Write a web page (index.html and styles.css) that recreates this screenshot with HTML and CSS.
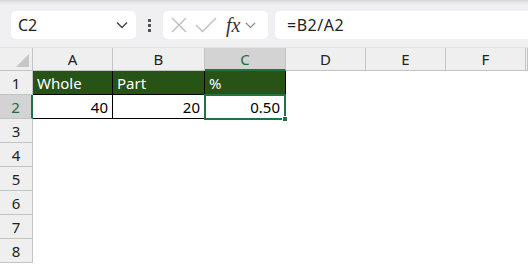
FILE: index.html
```html
<!DOCTYPE html>
<html lang="en">
<head>
  <meta charset="UTF-8">
  <title>Sheet</title>
  <link rel="stylesheet" href="styles.css">
</head>
<body>
  <div class="toolbar">
    <div class="name-box">
      <span class="name-text">C2</span>
      <svg class="chevron" width="12" height="8" viewBox="0 0 12 8"><path d="M1 1.5 L6 6.5 L11 1.5" fill="none" stroke="#444" stroke-width="1.4"/></svg>
    </div>
    <div class="dots"><span></span><span></span><span></span></div>
    <div class="fx-box">
      <svg width="18" height="18" viewBox="0 0 18 18"><path d="M2 2 L16 16 M16 2 L2 16" stroke="#bdbdbd" stroke-width="1.3"/></svg>
      <svg width="22" height="18" viewBox="0 0 22 18"><path d="M1 9 L7.5 15.5 L21 2" fill="none" stroke="#bdbdbd" stroke-width="1.3"/></svg>
      <span class="fx">fx</span>
      <svg class="fx-chevron" width="11" height="7" viewBox="0 0 11 7"><path d="M1 1 L5.5 5.5 L10 1" fill="none" stroke="#888" stroke-width="1.2"/></svg>
    </div>
    <div class="formula">=B2/A2</div>
  </div>

  <div class="sheet">
    <div class="hd corner"><span class="tri"></span></div>
    <div class="hd col">A</div>
    <div class="hd col">B</div>
    <div class="hd col sel">C</div>
    <div class="hd col">D</div>
    <div class="hd col">E</div>
    <div class="hd col">F</div>
    <div class="hd col last"></div>

    <div class="hd row">1</div>
    <div class="cell title">Whole</div>
    <div class="cell title">Part</div>
    <div class="cell title">%</div>
    <div class="cell"></div><div class="cell"></div><div class="cell"></div><div class="cell"></div>

    <div class="hd row sel">2</div>
    <div class="cell num boxed">40</div>
    <div class="cell num boxed">20</div>
    <div class="cell num active">0.50<span class="handle"></span></div>
    <div class="cell"></div><div class="cell"></div><div class="cell"></div><div class="cell"></div>

    <div class="hd row">3</div>
    <div class="cell"></div><div class="cell"></div><div class="cell"></div><div class="cell"></div><div class="cell"></div><div class="cell"></div><div class="cell"></div>
    <div class="hd row">4</div>
    <div class="cell"></div><div class="cell"></div><div class="cell"></div><div class="cell"></div><div class="cell"></div><div class="cell"></div><div class="cell"></div>
    <div class="hd row">5</div>
    <div class="cell"></div><div class="cell"></div><div class="cell"></div><div class="cell"></div><div class="cell"></div><div class="cell"></div><div class="cell"></div>
    <div class="hd row">6</div>
    <div class="cell"></div><div class="cell"></div><div class="cell"></div><div class="cell"></div><div class="cell"></div><div class="cell"></div><div class="cell"></div>
    <div class="hd row">7</div>
    <div class="cell"></div><div class="cell"></div><div class="cell"></div><div class="cell"></div><div class="cell"></div><div class="cell"></div><div class="cell"></div>
    <div class="hd row">8</div>
    <div class="cell"></div><div class="cell"></div><div class="cell"></div><div class="cell"></div><div class="cell"></div><div class="cell"></div><div class="cell"></div>
  </div>
</body>
</html>
```

FILE: styles.css
```css
* {
  box-sizing: border-box;
}
body {
  margin: 0;
  font-family: "Noto Sans", "Open Sans", sans-serif;
  background: #fff;
  overflow: hidden;
}
.toolbar {
  height: 48px;
  display: flex;
  align-items: flex-start;
  padding: 11px 0 0 11px;
  background: linear-gradient(#d8d6d8 0, #e9e8ea 3px, #f0eff1 5px);
  border-bottom: 1px solid #e4e4e4;
}
.name-box {
  width: 125px;
  height: 28px;
  background: #fff;
  border-radius: 5px;
  display: flex;
  align-items: center;
  justify-content: space-between;
  padding: 0 8px 0 7px;
}
.name-text {
  font-size: 16px;
  color: #222;
}
.dots {
  width: 27px;
  height: 28px;
  display: flex;
  flex-direction: column;
  align-items: center;
  justify-content: center;
  gap: 2px;
}
.dots span {
  width: 3px;
  height: 3px;
  background: #555;
}
.fx-box {
  width: 105px;
  height: 28px;
  background: #fff;
  border-radius: 5px;
  display: flex;
  align-items: center;
  padding-left: 7px;
  gap: 7px;
}
.fx {
  font-family: "Liberation Serif", serif;
  font-style: italic;
  font-size: 20px;
  color: #333;
  margin-left: 2px;
  line-height: 1;
}
.fx-chevron {
  margin-left: -2px;
}
.formula {
  flex: 1;
  height: 28px;
  margin-left: 7px;
  background: #fff;
  border-radius: 5px 0 0 5px;
  font-size: 16px;
  color: #222;
  line-height: 28px;
  padding-left: 12px;
  letter-spacing: 0.5px;
}
.sheet {
  display: grid;
  grid-template-columns: 33px 80px 92px 81px 80px 80px 80px 2px;
  grid-template-rows: 23px repeat(8, 24px);
  font-size: 15px;
}
.hd {
  background: #efefef;
  color: #222;
  display: flex;
  align-items: center;
  justify-content: center;
  border-right: 1px solid #c4c4c4;
  border-bottom: 1px solid #c4c4c4;
}
.hd.sel {
  background: #d3d3d3;
  color: #1d6b44;
}
.hd.col.sel {
  border-bottom: 2px solid #217346;
}
.hd.row.sel {
  border-right: 2px solid #217346;
}
.corner {
  position: relative;
}
.tri {
  position: absolute;
  right: 3px;
  bottom: 3px;
  width: 0;
  height: 0;
  border-left: 13px solid transparent;
  border-bottom: 13px solid #c6c6c6;
}
.cell {
  display: flex;
  align-items: center;
  padding: 0 4px;
  color: #000;
}
.title {
  background: #275317;
  color: #fff;
  border-right: 1px solid #000;
  border-bottom: 1px solid #000;
}
.num {
  justify-content: flex-end;
}
.boxed {
  border-right: 1px solid #000;
  border-bottom: 1px solid #000;
}
.active {
  position: relative;
  margin: -1px 0 -1px -1px;
  border: 2px solid #217346;
}
.handle {
  position: absolute;
  right: -4px;
  bottom: -4px;
  width: 6px;
  height: 6px;
  background: #217346;
  border: 1px solid #fff;
}
```
